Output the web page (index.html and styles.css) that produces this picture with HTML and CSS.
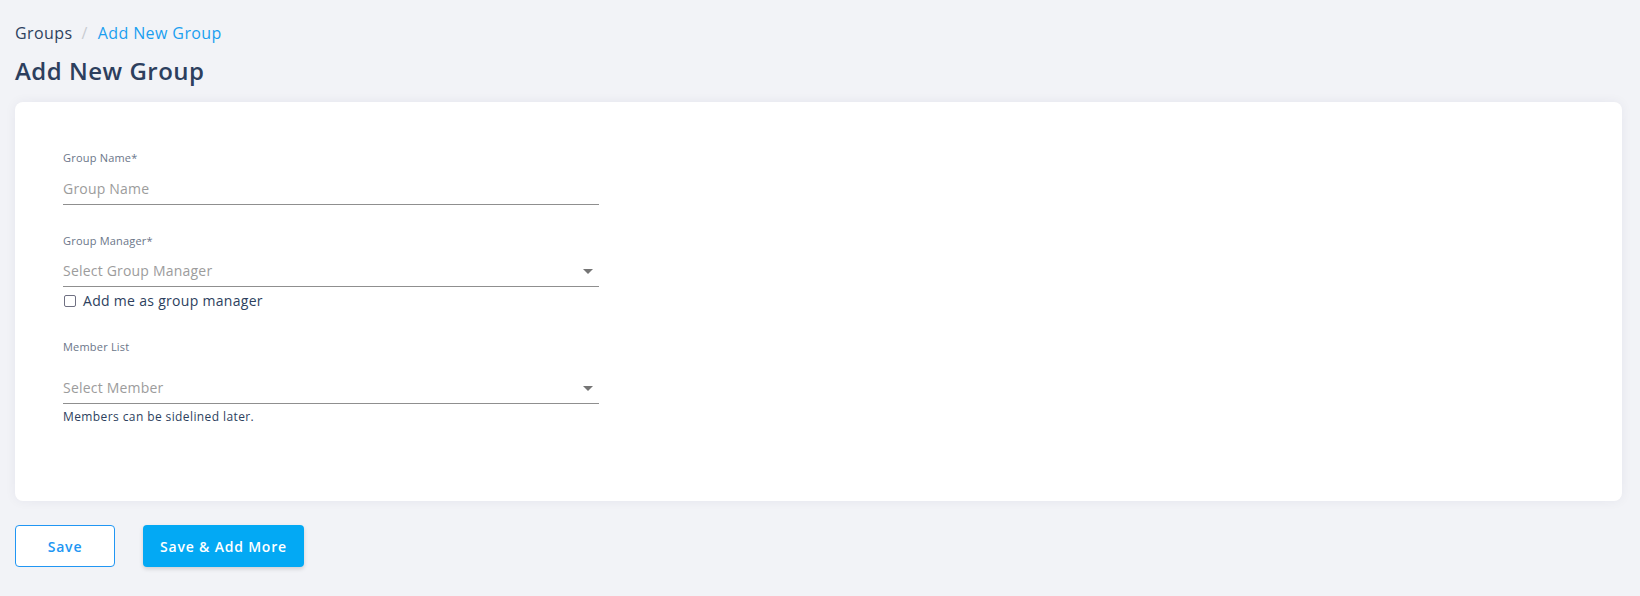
FILE: index.html
```html
<!DOCTYPE html>
<html lang="en">
<head>
<meta charset="utf-8">
<title>Add New Group</title>
<link rel="stylesheet" href="styles.css">
</head>
<body>
<div class="page">
  <nav class="breadcrumb">
    <span class="crumb">Groups</span>
    <span class="sep">/</span>
    <span class="crumb active">Add New Group</span>
  </nav>
  <h1 class="title">Add New Group</h1>

  <section class="card">
    <form class="form">
      <div class="field">
        <label class="label">Group Name*</label>
        <div class="input"><span class="placeholder">Group Name</span></div>
      </div>

      <div class="field field-gap">
        <label class="label">Group Manager*</label>
        <div class="input select"><span class="placeholder">Select Group Manager</span><span class="caret"></span></div>
        <div class="check-row">
          <span class="checkbox"></span>
          <span class="check-text">Add me as group manager</span>
        </div>
      </div>

      <div class="field field-gap-lg">
        <label class="label">Member List</label>
        <div class="input select tall"><span class="placeholder">Select Member</span><span class="caret"></span></div>
        <div class="helper">Members can be sidelined later.</div>
      </div>
    </form>
  </section>

  <div class="actions">
    <button class="btn btn-outline" type="button">Save</button>
    <button class="btn btn-primary" type="button">Save &amp; Add More</button>
  </div>
</div>
</body>
</html>
```

FILE: styles.css
```css
* { box-sizing: border-box; }

html, body {
  margin: 0;
  height: 100%;
}

body {
  background: #f2f3f7;
  font-family: "Open Sans", "Noto Sans", sans-serif;
  color: #2d3f5e;
}

.page {
  padding: 21px 18px 0 15px;
}

.breadcrumb {
  display: flex;
  align-items: center;
  font-size: 16px;
  line-height: 24px;
  letter-spacing: 0.4px;
}

.crumb { color: #2d3f5e; }
.crumb.active { color: #1a9ff0; font-weight: 500; }

.sep {
  color: #c9ccd2;
  margin: 0 10px 0 9px;
}

.title {
  margin: 9px 0 0 0;
  font-size: 24px;
  line-height: 34px;
  font-weight: 600;
  letter-spacing: 0.5px;
  color: #2d3f5e;
}

.card {
  margin-top: 14px;
  background: #ffffff;
  border-radius: 8px;
  box-shadow: 0 0 12px rgba(30, 40, 80, 0.06);
  padding: 48px 48px 80px 48px;
  height: 399px;
}

.form {
  width: 536px;
  display: flex;
  flex-direction: column;
}

.field {
  display: flex;
  flex-direction: column;
}

.field-gap { margin-top: 28px; }
.field-gap-lg { margin-top: 28px; }

.label {
  font-size: 11px;
  line-height: 16px;
  color: #6b7689;
  letter-spacing: 0.2px;
}

.input {
  display: flex;
  align-items: center;
  justify-content: space-between;
  padding: 13px 0 5px 0;
  border-bottom: 1px solid #8f8f8f;
  font-size: 14px;
  line-height: 20px;
}

.input.select { padding-top: 12px; }
.input.tall { padding-top: 23px; }

.placeholder {
  color: #9c9c9c;
  letter-spacing: 0.2px;
}

.caret {
  width: 0;
  height: 0;
  margin-right: 6px;
  border-left: 5px solid transparent;
  border-right: 5px solid transparent;
  border-top: 5px solid #757575;
}

.check-row {
  display: flex;
  align-items: center;
  gap: 7px;
  margin-top: 4px;
  height: 20px;
  padding-left: 1px;
}

.checkbox {
  width: 12px;
  height: 12px;
  border: 1.5px solid #6f7082;
  border-radius: 2px;
  background: #fff;
}

.check-text {
  font-size: 14px;
  line-height: 20px;
  color: #2d3f5e;
  letter-spacing: 0.3px;
}

.helper {
  margin-top: 5px;
  font-size: 12px;
  line-height: 16px;
  color: #2d3f5e;
  letter-spacing: 0.4px;
}

.actions {
  display: flex;
  gap: 28px;
  margin-top: 24px;
}

.btn {
  height: 42px;
  border-radius: 4px;
  font-family: "Open Sans", "Noto Sans", sans-serif;
  font-size: 14px;
  font-weight: 600;
  letter-spacing: 0.8px;
  cursor: pointer;
}

.btn-outline {
  width: 100px;
  background: #ffffff;
  border: 1px solid #2196f3;
  color: #2196f3;
}

.btn-primary {
  width: 161px;
  background: #03a9f4;
  border: none;
  color: #ffffff;
  box-shadow: 0 2px 4px rgba(0, 0, 0, 0.15);
}
```
